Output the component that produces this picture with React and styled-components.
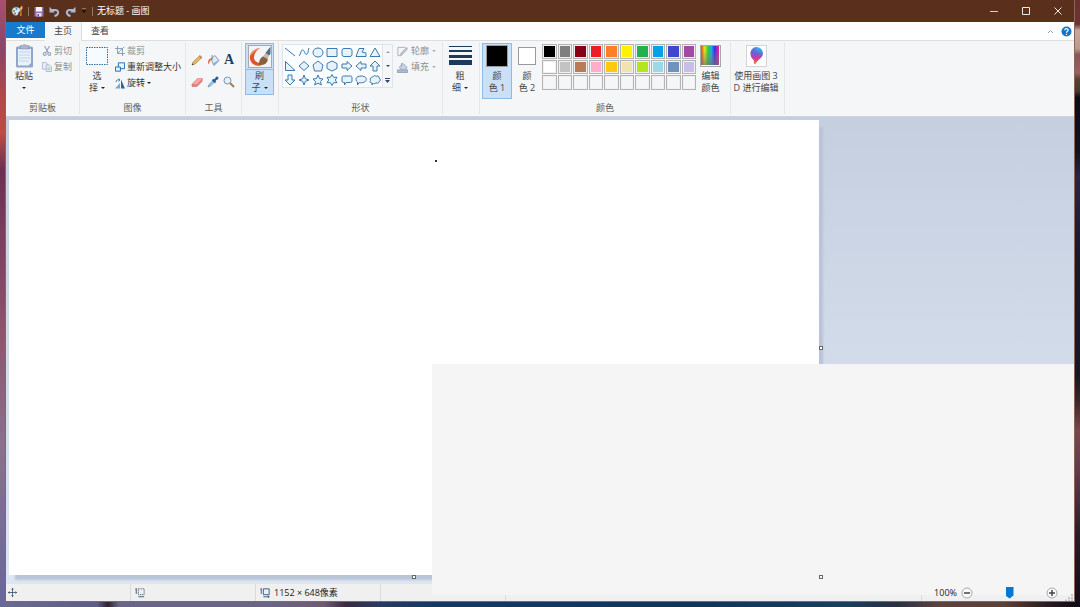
import { useState } from 'react'
import styled, { createGlobalStyle } from 'styled-components'


const GlobalStyle = createGlobalStyle`
  * {
    box-sizing: border-box;
  }

  body {
    margin: 0;
    font-family: "Open Sans", "Noto Sans CJK SC", sans-serif;
    font-size: 9px;
    line-height: 12px;
    color: #444444;
  }

  button {
    margin: 0;
    padding: 0;
    border: 0;
    background: none;
    font: inherit;
    color: inherit;
  }

  svg {
    display: block;
    flex: none;
  }
`;

const Desktop = styled.div`
  display: flex;
  min-height: 100vh;
  padding: 0 5px 5px;
  background:
    linear-gradient(#a8506e, #8c4468 8%, #b04848 16%, #bc4c44 22%, #6a2f52 28%, #7c4060 40%, #8e566e 56%, #8a7090 74%, #66689a) 0 0 / 5px 100% no-repeat,
    linear-gradient(#6a3030, #6a3430 4%, #c4a898 5%, #b89c90 8%, #8a545c 9%, #9a6064 12%, #5c4038 13%, #4a3834 15%, #0e0c18 16%, #15121f 25%, #2c2440 29%, #1c1828 42%, #1a1624 62%, #3a2828 66%, #7c4650 71%, #5d3a48 78%, #2c1c2a 88%, #120c18) 100% 0 / 5px 100% no-repeat,
    linear-gradient(90deg, #6a6a92, #5c5c86 9%, #33202c 10%, #6a6488 11%, #6c6484 25%, #705a72 30%, #3a2a40 32%, #2a3a60 35%, #123a62 40%, #0f3658 65%, #16405e 78%, #2a3040 83%, #5c4240 87%, #5a4038 93%, #2a1a20 97%, #0e0812);
`;

const Window = styled.div`
  position: relative;
  flex: 1;
  min-width: 0;
  display: flex;
  flex-direction: column;
  border: solid #8a6658;
  border-width: 0 1px 1px;
  background-color: #f5f6f7;
`;

const TitleBar = styled.header`
  display: flex;
  align-items: center;
  height: 22px;
  padding-left: 5px;
  background-color: #5a301c;
  color: #ffffff;
`;

const QuickAccess = styled.div`
  display: flex;
  align-items: center;
  gap: 5px;
`;

const Divider = styled.span`
  width: 1px;
  height: 9px;
  background-color: #94786a;
`;

const Title = styled.h1`
  flex: 1;
  margin: 0 0 0 4px;
  font-size: 9px;
  font-weight: 400;
`;

const CaptionButton = styled.button`
  display: grid;
  place-items: center;
  width: 32px;
  height: 22px;
`;

const TabBar = styled.nav`
  display: flex;
  height: 19px;
  background-color: #ffffff;
  border-bottom: 1px solid #dcdee0;
`;

const FileTab = styled.button`
  width: 39px;
  height: 16px;
  background-color: #1979ca;
  color: #ffffff;
`;

const Tab = styled.button`
  width: 37px;
  height: ${props => props.$active ? '19px' : '18px'};
  padding-bottom: 1px;
  border: solid ${props => props.$active ? '#dcdee0' : 'transparent'};
  border-width: 0 1px 0 0;
  background-color: ${props => props.$active ? '#f5f6f7' : 'transparent'};
`;

const TabTools = styled.div`
  display: flex;
  align-items: center;
  gap: 7px;
  margin-left: auto;
  padding-right: 2px;
`;

const Ribbon = styled.div`
  display: flex;
  height: 76px;
  padding: 1px 0 2px;
  border-bottom: 1px solid #ccd3df;
`;

const Group = styled.section`
  display: flex;
  flex-direction: column;
  justify-content: space-between;
  width: ${props => props.$width}px;
  padding: 1px 0 0 ${props => props.$pad || 0}px;
  border-right: 1px solid #e4e6e8;
`;

const GroupBody = styled.div`
  display: flex;
  align-items: flex-start;
  gap: ${props => props.$gap || 0}px;
`;

const GroupLabel = styled.h2`
  margin: 0 0 0 -${props => props.$pad || 0}px;
  min-height: 12px;
  font-size: 9px;
  font-weight: 400;
  text-align: center;
  color: #5c5c5c;
`;

const BigButton = styled.button`
  display: flex;
  flex-direction: column;
  align-items: center;
  width: ${props => props.$width}px;
  height: ${props => props.$tall ? '56px' : '52px'};
  white-space: nowrap;
  background-color: ${props => props.$selected ? '#c9e0f7' : 'transparent'};
  box-shadow: ${props => props.$selected ? 'inset 0 0 0 1px #8dbbe8' : 'none'};
`;

const IconSlot = styled.span`
  display: grid;
  place-items: center;
  width: 100%;
  height: 27px;
  border-bottom: 1px solid ${props => props.$split ? '#8dbbe8' : 'transparent'};
`;

const Line = styled.span`
  display: flex;
  align-items: center;
  justify-content: center;
  gap: 3px;
  height: 12px;
`;

const Arrow = styled.span`
  width: 4px;
  border: solid transparent;
  border-width: 2px 2px 0;
  border-top-color: ${props => props.$faded ? '#b0b0b0' : '#222222'};
`;

const Stack = styled.div`
  display: flex;
  flex-direction: column;
`;

const SmallButton = styled.button`
  display: flex;
  align-items: center;
  gap: ${props => props.$gap || 2}px;
  height: 16px;
  white-space: nowrap;
  color: ${props => props.disabled ? '#8f8f8f' : '#333333'};
`;

const ToolGrid = styled.div`
  display: grid;
  grid-template-columns: repeat(3, 16px);
  grid-auto-rows: 22px;
  padding-top: 6px;
`;

const ToolButton = styled.button`
  display: grid;
  place-items: center;
`;

const Gallery = styled.div`
  display: flex;
  width: 111px;
  height: 44px;
  margin-top: 1px;
  border: 1px solid #e0e4ea;
  background-color: #fafdff;
`;

const ShapeGrid = styled.div`
  flex: 1;
  display: grid;
  grid-template-columns: repeat(7, 1fr);
  grid-auto-rows: 14px;
`;

const ShapeScroll = styled.div`
  display: grid;
  grid-template-rows: repeat(3, 1fr);
  width: 10px;
  border-left: 1px solid #e0e4ea;
  background-color: #f5f6f7;
`;

const Swatch = styled.span`
  width: ${props => props.$size}px;
  height: ${props => props.$size}px;
  border: 1px solid #9a9a9a;
  background-color: ${props => props.$color};
`;

const Palette = styled.div`
  display: grid;
  grid-template-columns: repeat(10, 1fr);
  grid-template-rows: repeat(3, 1fr);
  gap: 1px;
  width: 154px;
  height: 46px;
  margin-top: 1px;
`;

const PaletteCell = styled.button`
  border: 1px solid #b4b4b4;
  background-color: ${props => props.$color};
  box-shadow: inset 0 0 0 1px #f0f0f0;
`;

const Workspace = styled.main`
  flex: 1;
  display: flex;
  padding: 3px 0 8px 3px;
  background: linear-gradient(#c5cfe0, #d3ddeb 60%, #dce6f4);
`;

const Canvas = styled.div`
  position: relative;
  width: 76.1%;
  background-color: #ffffff;
  box-shadow: 5px 6px 2px -1px #b9c5d7;
`;

const Dot = styled.span`
  position: absolute;
  left: 426px;
  top: 40px;
  width: 2px;
  height: 2px;
  background-color: #333333;
`;

const Handle = styled.span`
  position: absolute;
  z-index: ${props => props.$corner ? 2 : 0};
  left: ${props => props.$left};
  top: ${props => props.$top};
  width: 4px;
  height: 4px;
  border: 1px solid #606b68;
  background-color: #ffffff;
`;

const Cover = styled.div`
  position: absolute;
  z-index: 1;
  left: 426px;
  top: 364px;
  right: 0;
  bottom: 6px;
  background-color: #f5f5f5;
`;

const StatusBar = styled.footer`
  display: flex;
  height: 18px;
  border-top: 1px solid #e2e4e8;
  background-color: #f0f0f0;
  color: #222222;
`;

const StatusCell = styled.div`
  display: flex;
  align-items: center;
  gap: 4px;
  width: ${props => props.$fill ? 'auto' : '125px'};
  flex: ${props => props.$fill ? 1 : 'none'};
  padding-left: ${props => props.$pad || 4}px;
  border-right: 1px solid #dcdcdc;
`;

const Zoom = styled.div`
  position: relative;
  z-index: 2;
  display: flex;
  align-items: center;
  gap: 4px;
  padding-left: 12px;
`;

const ZoomButton = styled.button`
  display: grid;
  place-items: center;
`;

const ZoomSlider = styled.input`
  appearance: none;
  width: 59px;
  height: 12px;
  margin: 0 3px;
  background: transparent;

  &::-webkit-slider-thumb {
    appearance: none;
    width: 8px;
    height: 12px;
    background-color: #0078d7;
    clip-path: polygon(0 0, 100% 0, 100% 75%, 50% 100%, 0 75%);
  }
`;

const Grip = styled.svg`
  align-self: flex-end;
`;


const COLORS = [
  '#000000', '#7f7f7f', '#880015', '#ed1c24', '#ff7f27', '#fff200', '#22b14c', '#00a2e8', '#3f48cc', '#a349a4',
  '#ffffff', '#c3c3c3', '#b97a57', '#ffaec9', '#ffc90e', '#efe4b0', '#b5e61d', '#99d9ea', '#7092be', '#c8bfe7',
  ...Array(10).fill('#f5f6f7'),
]

const SHAPES = [
  ['直线', 'M1 2 11 10'],
  ['曲线', 'M1 10C3 8 3 3 5 4S7 10 9 8 10 3 11 2'],
  ['椭圆形', 'M6 2C9 2 11 4 11 6.500S9 11 6 11 1 9 1 6.500 3 2 6 2Z'],
  ['矩形', 'M1 2.500H11V10.500H1Z'],
  ['圆角矩形', 'M3 2.500H9Q11 2.500 11 4.500V8.500Q11 10.500 9 10.500H3Q1 10.500 1 8.500V4.500Q1 2.500 3 2.500Z'],
  ['多边形', 'M1 10.500 4 2.500H9L7 6 11 7V10.500Z'],
  ['三角形', 'M6 2 11 10.500H1Z'],
  ['直角三角形', 'M1.500 1.500 11 10.500H1.500Z'],
  ['菱形', 'M6 1.500 11 6 6 10.500 1 6Z'],
  ['五边形', 'M6 1 11 5 9.500 11H2.500L1 5Z'],
  ['六边形', 'M6 1 11 3.500V8.500L6 11 1 8.500V3.500Z'],
  ['右箭头', 'M1 4H6V1.500L11 6 6 10.500V8H1Z'],
  ['左箭头', 'M11 4H6V1.500L1 6 6 10.500V8H11Z'],
  ['向上箭头', 'M4 11V6H1L6 1 11 6H8V11Z'],
  ['向下箭头', 'M4 1V6H1L6 11 11 6H8V1Z'],
  ['四角星形', 'M6 1 7.300 4.700 11 6 7.300 7.300 6 11 4.700 7.300 1 6 4.700 4.700Z'],
  ['五角星形', 'M6 1 7.500 4.500 11 5 8.500 7.500 9.300 11 6 9.200 2.700 11 3.500 7.500 1 5 4.500 4.500Z'],
  ['六角星形', 'M6 .5 7.600 3.300H11L9.300 6 11 8.700H7.600L6 11.500 4.400 8.700H1L2.700 6 1 3.300H4.400Z'],
  ['圆角矩形标注', 'M2.500 2H9.500Q11 2 11 3.500V7Q11 8.500 9.500 8.500H5L3.500 11V8.500H2.500Q1 8.500 1 7V3.500Q1 2 2.500 2Z'],
  ['椭圆形标注', 'M4 8.700 2.500 11V8C-.5 6 1 2 6 2S12.500 5 10.500 7.200C9 8.800 6 9 4 8.700Z'],
  ['云形标注', 'M3 9C1 9 .5 7.500 1.500 6.500 .5 4.500 2 3 3.500 3.200 4.500 1.300 6.500 1.500 7 2.300 9 1.300 10.500 2.500 10 4 12 5 11.500 7 10.300 7.300 10 9.500 8 9.500 7 8.800 6 10 5 10 4.500 9L3 11Z'],
]

const Stroke = ({ size = 12, color = '#2a6295', width = 1, fill = 'none', box = 12, children }) => (
  <svg width={size} height={size} viewBox={`0 0 ${box} ${box}`} fill={fill} stroke={color} strokeWidth={width}>
    {children}
  </svg>
)

const PaintLogo = () => (
  <svg width="12" height="12" viewBox="0 0 12 12">
    <path d="M1 6C1 3 4 1.500 7 2.500 10 3.500 10 6 8 7 6.500 7.500 8 9 6.500 10 4 11.500 1 9 1 6Z" fill="#d6e8ee" stroke="#7896a0" strokeWidth=".5" />
    <circle cx="3" cy="6" r="1" fill="#4b9c55" />
    <circle cx="5.500" cy="4" r="1" fill="#3c8ed0" />
    <circle cx="4" cy="8.500" r="1" fill="#d2503c" />
    <path d="M9 11 9.500 4.500 10.500 4.500 10.500 11Z" fill="#e08428" />
    <path d="M9 4.500C8.500 2.500 10 2 11 .5 12 3 11.500 4 10.800 4.800Z" fill="#f2b45c" />
  </svg>
)

const SaveIcon = () => (
  <svg width="10" height="11" viewBox="0 0 10 11">
    <path d="M.5 1H9.500V10.500H.5Z" fill="#9470b8" />
    <path d="M2 1H8V5.500H2Z" fill="#f6f2fa" />
    <path d="M2.500 7H7.500V10.500H2.500Z" fill="#e6dcf0" />
    <path d="M3.500 8H5V10.500H3.500Z" fill="#6d4c94" />
  </svg>
)

const UndoIcon = ({ flip }) => (
  <svg width="11" height="11" viewBox="0 0 11 11" fill="none" stroke="#a9b8d4" strokeWidth="2">
    <g transform={flip ? 'matrix(-1 0 0 1 11 0)' : undefined}>
      <path d="M3 4H6C10.500 4 10 9 5.500 10" />
      <path d="M.5 .8V6.500H6Z" fill="#a9b8d4" stroke="none" />
    </g>
  </svg>
)

const PasteIcon = () => (
  <svg width="19" height="24" viewBox="0 0 19 24">
    <rect x="1" y="2.500" width="17" height="21" rx="1.500" fill="#8fa5cb" />
    <path d="M3 5H16V19L13.500 21.500H3Z" fill="#eaf1fb" />
    <path d="M4 8H15M4 11H15M4 14H15M4 17H14" stroke="#c0d0e8" />
    <path d="M5 1.500H7.500Q9.500 -.5 11.500 1.500H14V5H5Z" fill="#a9b6cc" stroke="#8090ac" strokeWidth=".6" />
  </svg>
)

const CutIcon = () => (
  <Stroke size={10} color="#8ea0ba" width={1.3}>
    <path d="M3 0 7.500 8M9 0 4.500 8" />
    <circle cx="3.200" cy="9.500" r="1.700" />
    <circle cx="8.800" cy="9.500" r="1.700" />
  </Stroke>
)

const CopyIcon = () => (
  <Stroke size={10} color="#9fb1cc" fill="#eaf0f9">
    <path d="M.5 .5H4.500L6.500 2.500V8.500H.5Z" />
    <path d="M5 3.500H9L11.500 6V11.500H5Z" />
    <path d="M6.500 7H10M6.500 9H10" />
  </Stroke>
)

const SelectIcon = () => (
  <svg width="22" height="19" viewBox="0 0 22 19">
    <rect x=".5" y=".5" width="21" height="17" fill="#f6fbff" stroke="#2f6c9e" strokeDasharray="1.500 1" />
  </svg>
)

const CropIcon = () => (
  <Stroke size={10} color="#8ea3b8" width={1.2}>
    <path d="M3 0V9H12M0 3H9V12M3 9 11 1" />
  </Stroke>
)

const ResizeIcon = () => (
  <Stroke size={10} color="#2a74ae" width={1.2} fill="#e8f4fd">
    <path d="M4 1H11.500V8H4Z" />
    <path d="M.5 6H6.500V11H.5Z" />
  </Stroke>
)

const RotateIcon = () => (
  <svg width="10" height="11" viewBox="0 0 10 11">
    <path d="M6 1.500V10.500H10Z" fill="#1d6ca8" />
    <path d="M5 5V10.500H0Z" fill="#7fa9cb" />
    <path d="M1 4C1 2 3 1.500 4.500 2M3.500 .5 5 2 3.500 3.500" fill="none" stroke="#2a74ae" strokeWidth=".9" />
  </svg>
)

const PencilIcon = () => (
  <svg width="12" height="12" viewBox="0 0 12 12">
    <path d="M1 11 2 8 9 1.500 11 3.500 4 10Z" fill="#e8bd58" stroke="#8b6d3a" strokeWidth=".6" />
    <path d="M9 1.500 11 3.500 10 4.500 8 2.500Z" fill="#cf7a6a" />
    <path d="M1 11 1.500 9.500 2.500 10.500Z" fill="#222222" />
  </svg>
)

const BucketIcon = () => (
  <svg width="13" height="13" viewBox="0 0 13 13">
    <path d="M4 5 8 1.500 12 6.500 7 11.500Z" fill="#dceaf6" stroke="#7288a2" strokeWidth=".8" />
    <path d="M5 1V6" stroke="#5f7186" strokeWidth=".8" />
    <path d="M5 4.500C2.500 4 1 5 1 10 2.500 10 2.500 7 4 6Z" fill="#e06a38" />
    <path d="M6 9.500 11.500 6 12 6.500 7 11.500Z" fill="#7fb0dc" />
  </svg>
)

const TextIcon = styled.span`
  font-family: "Liberation Serif", serif;
  font-size: 14px;
  font-weight: 700;
  color: #1f3f66;
`;

const EraserIcon = () => (
  <svg width="12" height="11" viewBox="0 0 12 11">
    <path d="M1 7 6.500 1.500H11.500L11 4.500 6 9.500H1Z" fill="#e98080" stroke="#bc5f62" strokeWidth=".5" />
    <path d="M1 7 6.500 1.500H11.500L6 7Z" fill="#f4a9a6" />
  </svg>
)

const PickerIcon = () => (
  <svg width="12" height="12" viewBox="0 0 12 12">
    <path d="M1 11 2 8.500 6.500 4 8 5.500 3.500 10Z" fill="#9bcbea" stroke="#4e86b4" strokeWidth=".6" />
    <path d="M5.500 3.500 8.500 6.500M7.500 4.500 10 2" stroke="#2c5a8a" strokeWidth="2" />
    <circle cx="10" cy="2" r="1.500" fill="#2c5a8a" />
  </svg>
)

const MagnifierIcon = () => (
  <svg width="12" height="12" viewBox="0 0 12 12">
    <path d="M7 7 11 11" stroke="#a57646" strokeWidth="1.800" />
    <circle cx="4.500" cy="4.500" r="3.500" fill="#e3f1fb" stroke="#7d92a8" />
  </svg>
)

// orange stroke sweeping into the brush tip, handle up to the right corner
const BrushIcon = () => (
  <svg width="24" height="23" viewBox="0 0 24 23">
    <rect x=".5" y=".5" width="23" height="22" fill="#f2f4f5" stroke="#a7a9ac" />
    <path d="M12 3C6 3.500 1 8 2 14 3 19 7 21.500 13 20.500L14 18C9 18 6 16 6 12.500 6 9 8.500 5 12 3Z" fill="#e2552c" />
    <path d="M12 3C7 3.500 3 6.500 2.500 11 5 7 8 5 12 3Z" fill="#f4a07c" />
    <path d="M11 19.500C11 15 13 11.500 16.500 11 19.500 11.500 20.500 14 19 17 17 20 14 20.500 11 19.500Z" fill="#8b5f3c" />
    <path d="M15 11.500 17.500 8 21 10.500 19.500 14Z" fill="#c0bcb4" />
    <path d="M17.500 8 22.500 1.500V9L21 10.500Z" fill="#526c84" />
  </svg>
)

const OutlineIcon = () => (
  <Stroke size={11} color="#a3aebd">
    <path d="M9 1.500H1V10.500H5" />
    <path d="M3.500 9 10.500 1.500 11.500 3 5 10Z" fill="#c3cad4" />
  </Stroke>
)

const FillIcon = () => (
  <Stroke size={11} color="#94a3b8" fill="#c8d3e3">
    <path d="M2.500 5.500 6.500 1.500 11 6 6.500 10Z" />
    <path d="M5 1V5" />
    <path d="M.5 8.500H11.500V11.500H.5Z" fill="#a9bad4" />
  </Stroke>
)

const SizeIcon = () => (
  <svg width="23" height="20" viewBox="0 0 23 20" fill="#1d3a5c">
    <rect y="0" width="23" height="1" />
    <rect y="4" width="23" height="2" />
    <rect y="9" width="23" height="3" />
    <rect y="14" width="23" height="5" />
  </svg>
)

const RainbowIcon = () => (
  <svg width="21" height="22" viewBox="0 0 21 22">
    <defs>
      <linearGradient id="hue">
        <stop offset="0" stopColor="#f03c1c" />
        <stop offset=".2" stopColor="#e8e020" />
        <stop offset=".4" stopColor="#20d040" />
        <stop offset=".58" stopColor="#20a8e8" />
        <stop offset=".75" stopColor="#4030e0" />
        <stop offset="1" stopColor="#f020a0" />
      </linearGradient>
      <linearGradient id="grey" x2="0" y2="1">
        <stop offset=".2" stopColor="#808080" stopOpacity="0" />
        <stop offset="1" stopColor="#707070" stopOpacity=".7" />
      </linearGradient>
    </defs>
    <rect x=".5" y=".5" width="20" height="21" fill="#ffffff" stroke="#a6a6a6" />
    <rect x="1" y="1" width="18" height="19" fill="url(#hue)" />
    <rect x="1" y="1" width="18" height="19" fill="url(#grey)" />
  </svg>
)

const Paint3DIcon = () => (
  <svg width="21" height="22" viewBox="0 0 21 22">
    <defs>
      <linearGradient id="drop" x1=".7" y1="0" x2=".4" y2="1">
        <stop offset="0" stopColor="#34c0ee" />
        <stop offset=".4" stopColor="#5a68dc" />
        <stop offset=".7" stopColor="#c83ca8" />
        <stop offset="1" stopColor="#f08030" />
      </linearGradient>
    </defs>
    <rect x=".5" y=".5" width="20" height="21" fill="#ffffff" stroke="#d4d4d4" />
    <path d="M10.500 2C14.500 2 17 5 17 8.500 17 12 13 14 11.500 16 10.500 17.500 10 19 8.500 19 7 18.500 8.500 16.500 7.500 15 5.500 13 4.500 11 4.500 8.500 4.500 5 7 2 10.500 2Z" fill="url(#drop)" />
    <path d="M10.500 2C7 2 4.500 5 4.500 8.500 4.500 11 5.500 13 7.500 15 11 13 10 9 10.500 2Z" fill="#8a50d0" opacity=".3" />
    <path d="M11 10C14 8 15 9 16.500 10.500 15 13 12.500 14 11.500 16 10 15 9 12 11 10Z" fill="#e83c70" opacity=".55" />
  </svg>
)

const CaptionIcon = ({ label, children }) => <ToolButton aria-label={label}>{children}</ToolButton>

const TitleArea = () => (
  <TitleBar>
    <QuickAccess>
      <PaintLogo />
      <Divider />
      <CaptionIcon label="保存"><SaveIcon /></CaptionIcon>
      <CaptionIcon label="撤消"><UndoIcon /></CaptionIcon>
      <CaptionIcon label="重做"><UndoIcon flip /></CaptionIcon>
      <CaptionIcon label="自定义快速访问工具栏">
        <svg width="6" height="6" viewBox="0 0 6 6"><path d="M1 .5H5" stroke="#8a7468" /><path d="M.5 2.500H5.500L3 5Z" fill="#160c08" /></svg>
      </CaptionIcon>
      <Divider />
    </QuickAccess>
    <Title>无标题 - 画图</Title>
    <CaptionButton aria-label="最小化">
      <Stroke size={8} box={8} color="#d8ccc6"><path d="M0 4.500H8" /></Stroke>
    </CaptionButton>
    <CaptionButton aria-label="最大化">
      <Stroke size={8} box={8} color="#efe9e6"><path d="M.5 .5H7.500V7.500H.5Z" /></Stroke>
    </CaptionButton>
    <CaptionButton aria-label="关闭">
      <Stroke size={8} box={8} color="#efe9e6"><path d="M.5 .5 7.500 7.500M7.500 .5 .5 7.500" /></Stroke>
    </CaptionButton>
  </TitleBar>
)

const RibbonArea = () => (
  <Ribbon>
    <Group $width={74} $pad={8}>
      <GroupBody $gap={8}>
        <BigButton $width={20}>
          <IconSlot><PasteIcon /></IconSlot>
          <Line>粘贴</Line>
          <Line><Arrow /></Line>
        </BigButton>
        <Stack>
          <SmallButton disabled><CutIcon />剪切</SmallButton>
          <SmallButton disabled><CopyIcon />复制</SmallButton>
        </Stack>
      </GroupBody>
      <GroupLabel $pad={8}>剪贴板</GroupLabel>
    </Group>

    <Group $width={106} $pad={6}>
      <GroupBody $gap={7}>
        <BigButton $width={22}>
          <IconSlot><SelectIcon /></IconSlot>
          <Line>选</Line>
          <Line>择<Arrow /></Line>
        </BigButton>
        <Stack>
          <SmallButton disabled><CropIcon />裁剪</SmallButton>
          <SmallButton><ResizeIcon />重新调整大小</SmallButton>
          <SmallButton><RotateIcon />旋转<Arrow /></SmallButton>
        </Stack>
      </GroupBody>
      <GroupLabel $pad={6}>图像</GroupLabel>
    </Group>

    <Group $width={56} $pad={3}>
      <ToolGrid>
        <ToolButton aria-label="铅笔"><PencilIcon /></ToolButton>
        <ToolButton aria-label="用颜色填充"><BucketIcon /></ToolButton>
        <ToolButton aria-label="文本"><TextIcon>A</TextIcon></ToolButton>
        <ToolButton aria-label="橡皮擦"><EraserIcon /></ToolButton>
        <ToolButton aria-label="颜色选取器"><PickerIcon /></ToolButton>
        <ToolButton aria-label="放大镜"><MagnifierIcon /></ToolButton>
      </ToolGrid>
      <GroupLabel $pad={3}>工具</GroupLabel>
    </Group>

    <Group $width={37} $pad={3}>
      <BigButton $width={29} $selected>
        <IconSlot $split><BrushIcon /></IconSlot>
        <Line>刷</Line>
        <Line>子<Arrow /></Line>
      </BigButton>
    </Group>

    <Group $width={164} $pad={3}>
      <GroupBody $gap={4}>
        <Gallery>
          <ShapeGrid>
            {SHAPES.map(([name, path]) => (
              <ToolButton key={name} aria-label={name}>
                <Stroke color="#3f78aa" fill={name === '直线' || name === '曲线' ? 'none' : '#e6f3fc'}>
                  <path d={path} />
                </Stroke>
              </ToolButton>
            ))}
          </ShapeGrid>
          <ShapeScroll>
            <ToolButton aria-label="向上滚动">
              <svg width="4" height="2" viewBox="0 0 4 2"><path d="M0 2 2 0 4 2Z" fill="#a0a0a0" /></svg>
            </ToolButton>
            <ToolButton aria-label="向下滚动">
              <svg width="4" height="2" viewBox="0 0 4 2"><path d="M0 0H4L2 2Z" fill="#33466a" /></svg>
            </ToolButton>
            <ToolButton aria-label="更多形状">
              <svg width="5" height="5" viewBox="0 0 5 5"><path d="M0 0H5V1H0ZM0 2H5L2.500 5Z" fill="#33466a" /></svg>
            </ToolButton>
          </ShapeScroll>
        </Gallery>
        <Stack>
          <SmallButton disabled $gap={3}><OutlineIcon />轮廓<Arrow $faded /></SmallButton>
          <SmallButton disabled $gap={3}><FillIcon />填充<Arrow $faded /></SmallButton>
        </Stack>
      </GroupBody>
      <GroupLabel $pad={3}>形状</GroupLabel>
    </Group>

    <Group $width={37} $pad={2}>
      <BigButton $width={30}>
        <IconSlot><SizeIcon /></IconSlot>
        <Line>粗</Line>
        <Line>细<Arrow /></Line>
      </BigButton>
    </Group>

    <Group $width={251} $pad={2}>
      <GroupBody $gap={3}>
        <BigButton $width={30} $selected $tall>
          <IconSlot><Swatch $size={22} $color="#000000" /></IconSlot>
          <Line>颜</Line>
          <Line>色 1</Line>
        </BigButton>
        <BigButton $width={24} $tall>
          <IconSlot><Swatch $size={18} $color="#ffffff" /></IconSlot>
          <Line>颜</Line>
          <Line>色 2</Line>
        </BigButton>
        <Palette>
          {COLORS.map((color, i) => (
            <PaletteCell key={i} $color={color} aria-label={color} />
          ))}
        </Palette>
        <BigButton $width={23}>
          <IconSlot><RainbowIcon /></IconSlot>
          <Line>编辑</Line>
          <Line>颜色</Line>
        </BigButton>
      </GroupBody>
      <GroupLabel $pad={2}>颜色</GroupLabel>
    </Group>

    <Group $width={54} $pad={2}>
      <BigButton $width={46}>
        <IconSlot><Paint3DIcon /></IconSlot>
        <Line>使用画图 3</Line>
        <Line>D 进行编辑</Line>
      </BigButton>
    </Group>
  </Ribbon>
)

const StatusArea = () => {
  const [zoom, setZoom] = useState(50)

  return (
    <StatusBar>
      <StatusCell $pad={2}>
        <Stroke size={9} color="#2b4468"><path d="M6 0V12M0 6H12M4.500 2 6 .5 7.500 2M4.500 10 6 11.500 7.500 10M2 4.500 .5 6 2 7.500M10 4.500 11.500 6 10 7.500" /></Stroke>
      </StatusCell>
      <StatusCell>
        <Stroke size={10} color="#2b4468"><path d="M0 2 1.500 .5V7" /><path d="M4 1H11V8H4Z" strokeDasharray="1.500 1" /><path d="M4 10.500H11" /></Stroke>
      </StatusCell>
      <StatusCell>
        <Stroke size={10} color="#2b4468"><path d="M0 2 1.500 .5V7" /><path d="M4 1H11V8H4Z" fill="#e4f0fa" /><path d="M4 10.500H11M9.500 9 11 10.500 9.500 12" /></Stroke>
        1152 × 648像素
      </StatusCell>
      <StatusCell />
      <StatusCell $fill />
      <Zoom>
        <span>100%</span>
        <ZoomButton aria-label="缩小" onClick={() => setZoom(zoom - 10)}>
          <Stroke color="#a8a8a8" fill="#fafafa"><circle cx="6" cy="6" r="5" /><path d="M3 6H9" stroke="#444444" strokeWidth="1.500" /></Stroke>
        </ZoomButton>
        <ZoomSlider type="range" aria-label="缩放" value={zoom} onChange={e => setZoom(Number(e.target.value))} />
        <ZoomButton aria-label="放大" onClick={() => setZoom(zoom + 10)}>
          <Stroke color="#a8a8a8" fill="#fafafa"><circle cx="6" cy="6" r="5" /><path d="M3 6H9M6 3V9" stroke="#444444" strokeWidth="1.500" /></Stroke>
        </ZoomButton>
        <Grip width="12" height="8" viewBox="0 0 12 8" fill="#c4c4c4">
          <path d="M9 1H11V3H9ZM6 4H8V6H6ZM9 4H11V6H9ZM3 6.500H5V8H3ZM6 6.500H8V8H6ZM9 6.500H11V8H9Z" />
        </Grip>
      </Zoom>
    </StatusBar>
  )
}

export default function App() {
  return (
    <>
      <GlobalStyle />
      <Desktop>
        <Window>
          <TitleArea />
          <TabBar>
            <FileTab>文件</FileTab>
            <Tab $active>主页</Tab>
            <Tab>查看</Tab>
            <TabTools>
              <ToolButton aria-label="最小化功能区">
                <Stroke size={7} box={7} color="#a0a0a0"><path d="M1 5 3.500 2.500 6 5" /></Stroke>
              </ToolButton>
              <ToolButton aria-label="帮助">
                <svg width="11" height="11" viewBox="0 0 11 11">
                  <circle cx="5.500" cy="5.500" r="5" fill="#0f75cc" />
                  <path d="M3.800 4.300C3.800 2.200 7.200 2.200 7.200 4.200 7.200 5.300 5.500 5.300 5.500 6.700M5.500 7.800V9" fill="none" stroke="#ffffff" strokeWidth="1.200" />
                </svg>
              </ToolButton>
            </TabTools>
          </TabBar>
          <RibbonArea />
          <Workspace>
            <Canvas>
              <Dot />
              <Handle $left="100%" $top="calc(50% - 2px)" />
              <Handle $left="calc(50% - 2px)" $top="100%" />
              <Handle $corner $left="100%" $top="100%" />
            </Canvas>
          </Workspace>
          <StatusArea />
          <Cover />
        </Window>
      </Desktop>
    </>
  )
}
